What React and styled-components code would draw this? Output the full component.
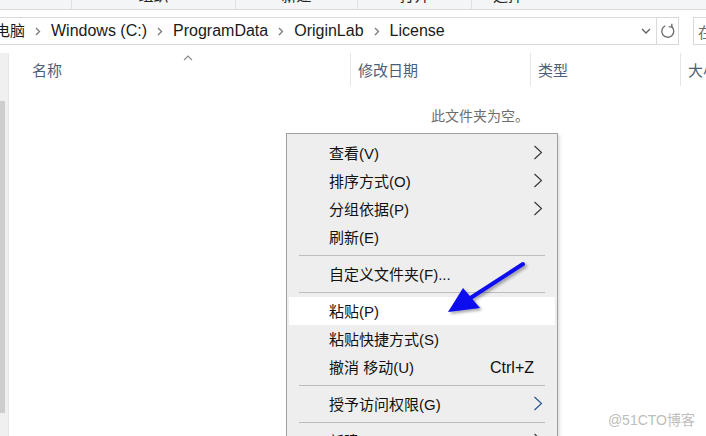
import React from "react";
import styled, { createGlobalStyle } from "styled-components";

const GlobalStyle = createGlobalStyle`
  html, body {
    margin: 0;
    padding: 0;
    background: #fff;
  }
  body {
    font-family: "Liberation Sans", "Noto Sans CJK SC", sans-serif;
  }
`;

const Window = styled.div`
  width: 706px;
  height: 436px;
  overflow: hidden;
  position: relative;
  background: #fff;
  display: flex;
  flex-direction: column;
`;

const Ribbon = styled.div`
  height: 9px;
  flex: none;
  display: flex;
  background: #f4f5f6;
  border-bottom: 1px solid #dcdcdc;
  overflow: hidden;
`;

const RibbonGroup = styled.div`
  width: ${(p) => p.w}px;
  flex: none;
  display: flex;
  justify-content: center;
  border-right: ${(p) => (p.last ? "none" : "1px solid #e1e1e1")};
`;

const RibbonLabel = styled.span`
  font-size: 15px;
  line-height: 15px;
  margin-top: -12px;
  color: #222;
`;

const AddressRow = styled.div`
  flex: none;
  display: flex;
  align-items: stretch;
  height: 28px;
  margin-top: 7px;
  margin-left: -21px;
`;

const AddressBar = styled.div`
  width: 700px;
  flex: none;
  display: flex;
  align-items: center;
  border: 1px solid #d9d9d9;
  box-sizing: border-box;
  background: #fff;
`;

const Crumbs = styled.div`
  flex: 1;
  display: flex;
  align-items: center;
`;

const Crumb = styled.span`
  font-size: ${(p) => (p.cjk ? 15 : 16)}px;
  line-height: 26px;
  color: #1a1a1a;
  white-space: nowrap;
`;

const CrumbSep = styled.span`
  width: 26px;
  flex: none;
  display: flex;
  justify-content: center;
  align-items: center;
`;

const DropButton = styled.div`
  width: 20px;
  display: flex;
  align-items: center;
  justify-content: center;
`;

const RefreshButton = styled.div`
  width: 21px;
  align-self: stretch;
  display: flex;
  align-items: center;
  justify-content: center;
  border-left: 1px solid #d9d9d9;
`;

const SearchBox = styled.div`
  margin-left: 14px;
  width: 200px;
  flex: none;
  border: 1px solid #d9d9d9;
  box-sizing: border-box;
  display: flex;
  align-items: center;
  padding-left: 4px;
  font-size: 15px;
  color: #6d6d6d;
  white-space: nowrap;
`;

const Body = styled.div`
  flex: 1;
  margin-top: 8px;
  display: flex;
  position: relative;
`;

const NavPane = styled.div`
  width: 8px;
  flex: none;
  background: #f0f0f0;
  border-right: 1px solid #e6e6e6;
`;

const ScrollThumb = styled.div`
  width: 5px;
  height: 312px;
  margin-top: 48px;
  background: #cdcdcd;
`;

const Content = styled.div`
  flex: 1;
  display: flex;
  flex-direction: column;
`;

const HeaderRow = styled.div`
  height: 33px;
  display: flex;
`;

const HeaderCell = styled.div`
  width: ${(p) => p.w}px;
  flex: none;
  position: relative;
  box-sizing: border-box;
  padding-left: ${(p) => p.pad}px;
  display: flex;
  align-items: center;
  font-size: 15px;
  color: #4c607a;
  border-right: 1px solid #e5e5e5;
  white-space: nowrap;
`;

const SortCaret = styled.svg`
  position: absolute;
  left: 174px;
  top: 2px;
`;

const EmptyText = styled.div`
  margin-top: 20px;
  padding-left: 422px;
  font-size: 14px;
  line-height: 20px;
  color: #6d6d6d;
`;

const Menu = styled.div`
  position: absolute;
  left: 286px;
  top: 80px;
  width: 272px;
  box-sizing: border-box;
  background: #eeeeee;
  border: 1px solid #a0a0a0;
  box-shadow: 2px 2px 3px rgba(0, 0, 0, 0.12);
  padding: 5px 0;
`;

const Item = styled.div`
  height: 28px;
  box-sizing: border-box;
  margin: 0 2px;
  display: flex;
  align-items: center;
  padding: 0 12px 2px 40px;
  font-size: 15px;
  color: #111;
  background: ${(p) => (p.active ? "#ffffff" : "transparent")};
`;

const ItemLabel = styled.span`
  flex: 1;
  white-space: nowrap;
`;

const Shortcut = styled.span`
  font-size: 16px;
  padding-top: 4px;
  margin-right: 9px;
`;

const Separator = styled.div`
  height: 9px;
  margin: 0 12px;
  display: flex;
  align-items: center;
  &::after {
    content: "";
    flex: 1;
    height: 1px;
    background: #bdbdbd;
  }
`;

const Annotation = styled.svg`
  position: absolute;
  left: 430px;
  top: 200px;
`;

const Watermark = styled.div`
  position: absolute;
  right: 11px;
  bottom: 7px;
  font-size: 14px;
  color: #bdbdbd;
`;

const Chevron = ({ color = "#333" }) => (
  <svg width="10" height="15" viewBox="0 0 10 15">
    <polyline points="1.5,1 8.5,7.5 1.5,14" fill="none" stroke={color} strokeWidth="1.1" />
  </svg>
);

const CrumbChevron = () => (
  <svg width="6" height="9" viewBox="0 0 6 9">
    <polyline points="1,1 4.5,4.5 1,8" fill="none" stroke="#7a7a7a" strokeWidth="1.3" />
  </svg>
);

const crumbs = [
  { text: "此电脑", cjk: true },
  { text: "Windows (C:)" },
  { text: "ProgramData" },
  { text: "OriginLab" },
  { text: "License" },
];

const ribbon = [
  { w: 71, label: "" },
  { w: 163, label: "组织" },
  { w: 121, label: "新建" },
  { w: 113, label: "打开" },
  { w: 72, label: "选择", last: true },
];

const menu = [
  { label: "查看(V)", sub: true },
  { label: "排序方式(O)", sub: true },
  { label: "分组依据(P)", sub: true },
  { label: "刷新(E)" },
  { sep: true },
  { label: "自定义文件夹(F)..." },
  { sep: true },
  { label: "粘贴(P)", active: true },
  { label: "粘贴快捷方式(S)" },
  { label: "撤消 移动(U)", shortcut: "Ctrl+Z" },
  { sep: true },
  { label: "授予访问权限(G)", sub: true, subColor: "#1f4e8c" },
  { sep: true },
  { label: "新建(W)", sub: true },
];

export default function App() {
  return (
    <>
      <GlobalStyle />
      <Window>
        <Ribbon>
          {ribbon.map((g, i) => (
            <RibbonGroup key={i} w={g.w} last={g.last}>
              <RibbonLabel>{g.label}</RibbonLabel>
            </RibbonGroup>
          ))}
        </Ribbon>

        <AddressRow>
          <AddressBar>
            <Crumbs>
              {crumbs.map((c, i) => (
                <React.Fragment key={c.text}>
                  {i > 0 && (
                    <CrumbSep>
                      <CrumbChevron />
                    </CrumbSep>
                  )}
                  <Crumb cjk={c.cjk}>{c.text}</Crumb>
                </React.Fragment>
              ))}
            </Crumbs>
            <DropButton>
              <svg width="10" height="6" viewBox="0 0 10 6">
                <polyline points="1,1 5,5 9,1" fill="none" stroke="#606060" strokeWidth="1.3" />
              </svg>
            </DropButton>
            <RefreshButton>
              <svg width="16" height="16" viewBox="0 0 16 16">
                <path d="M11.6 3.6 A6 6 0 1 1 5.2 2.8" fill="none" stroke="#707070" strokeWidth="1.4" />
                <polyline points="11.8,0.8 11.8,3.9 8.7,3.9" fill="none" stroke="#707070" strokeWidth="1.4" />
              </svg>
            </RefreshButton>
          </AddressBar>
          <SearchBox>在 License 中搜索</SearchBox>
        </AddressRow>

        <Body>
          <NavPane>
            <ScrollThumb />
          </NavPane>
          <Content>
            <HeaderRow>
              <HeaderCell w={342} pad={23}>
                名称
                <SortCaret width="10" height="6" viewBox="0 0 10 6">
                  <polyline points="1,5 5,1 9,5" fill="none" stroke="#8a8a8a" strokeWidth="1.1" />
                </SortCaret>
              </HeaderCell>
              <HeaderCell w={180} pad={7}>修改日期</HeaderCell>
              <HeaderCell w={150} pad={7}>类型</HeaderCell>
              <HeaderCell w={60} pad={7}>大小</HeaderCell>
            </HeaderRow>
            <EmptyText>此文件夹为空。</EmptyText>
          </Content>

          <Menu>
            {menu.map((m, i) =>
              m.sep ? (
                <Separator key={i} />
              ) : (
                <Item key={i} active={m.active}>
                  <ItemLabel>{m.label}</ItemLabel>
                  {m.shortcut && <Shortcut>{m.shortcut}</Shortcut>}
                  {m.sub && <Chevron color={m.subColor} />}
                </Item>
              )
            )}
          </Menu>

          <Annotation width="110" height="70" viewBox="0 0 110 70">
            <defs>
              <filter id="shadow" x="-20%" y="-20%" width="150%" height="150%">
                <feDropShadow dx="2" dy="2" stdDeviation="1.5" floodColor="#000" floodOpacity="0.35" />
              </filter>
            </defs>
            <g filter="url(#shadow)">
              <line x1="93" y1="11" x2="42" y2="44" stroke="#0a0aef" strokeWidth="4" strokeLinecap="round" />
              <polygon points="18,59 33,35 50,55" fill="#0a0aef" />
            </g>
          </Annotation>
        </Body>

        <Watermark>@51CTO博客</Watermark>
      </Window>
    </>
  );
}
